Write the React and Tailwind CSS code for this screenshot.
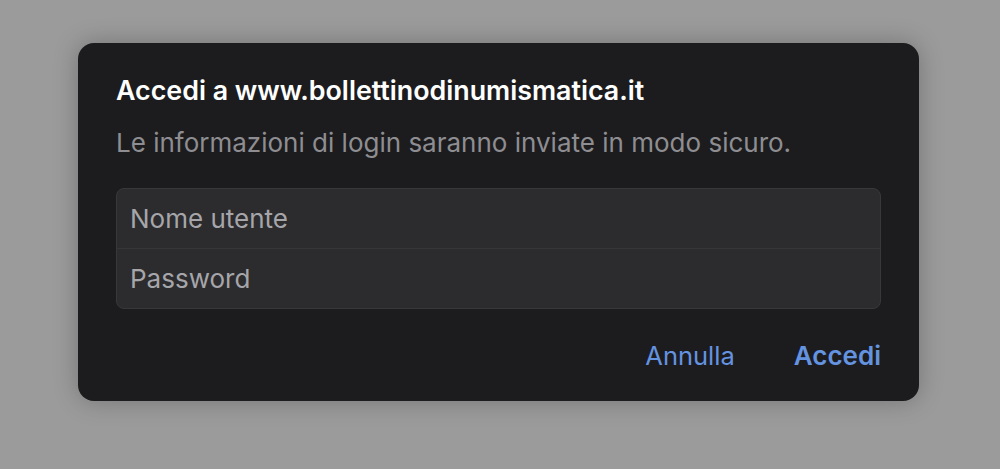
export default function App() {
  return (
    <div
      className="w-[1000px] h-[469px] bg-[#9b9b9b] overflow-hidden pt-[43px]"
      style={{ fontFamily: 'Inter, "Noto Sans", sans-serif' }}
    >
      <div className="ml-[78px] w-[841px] h-[358px] rounded-[16px] bg-[#1c1c1e] shadow-[0_0_24px_rgba(0,0,0,0.25)] px-[38px] pt-[31px]">
        <h1 className="text-[26.8px] leading-[32px] font-semibold text-white">
          Accedi a www.bollettinodinumismatica.it
        </h1>
        <p className="mt-[21px] text-[26px] leading-[32px] text-[#8e8e92]">
          Le informazioni di login saranno inviate in modo sicuro.
        </p>

        {/* campi */}
        <div className="mt-[29px] rounded-[8px] border border-[#38383a] bg-[#2c2c2e] overflow-hidden">
          <div className="h-[60px] flex items-center px-[13px] border-b border-[#363638] text-[26px] text-[#a6a6aa]">
            Nome utente
          </div>
          <div className="h-[59px] flex items-center px-[13px] text-[26px] text-[#a6a6aa]">
            Password
          </div>
        </div>

        {/* azioni */}
        <div className="mt-[31px] flex justify-end gap-[59px] text-[26px] leading-[32px] text-[#6493e0]">
          <span className="text-[25.5px]">Annulla</span>
          <span className="font-semibold">Accedi</span>
        </div>
      </div>
    </div>
  );
}
